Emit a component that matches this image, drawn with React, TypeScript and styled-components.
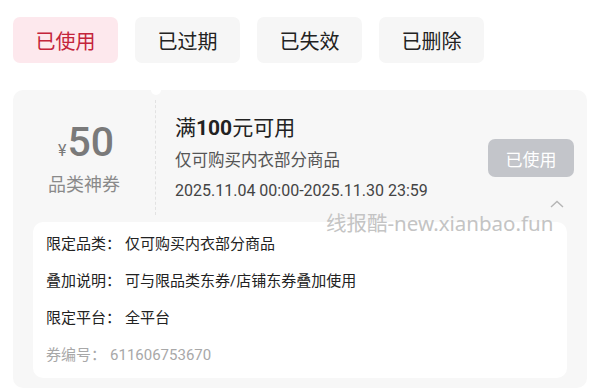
import styled, { createGlobalStyle } from "styled-components"

const GlobalStyle = createGlobalStyle`
  body {
    margin: 0;
    background: #ffffff;
    font-family: Roboto, "Noto Sans CJK SC", sans-serif;
    overflow: hidden;
  }
`

const TABS = ["已使用", "已过期", "已失效", "已删除"]

const DETAILS = [
  { label: "限定品类：", value: "仅可购买内衣部分商品" },
  { label: "叠加说明：", value: "可与限品类东券/店铺东券叠加使用" },
  { label: "限定平台：", value: "全平台" },
  { label: "券编号：", value: "611606753670", muted: true }
]

export default function App() {
  return (
    <>
      <GlobalStyle />
      <Page>
        <TabRow>
          {TABS.map((t, i) => (
            <Tab key={t} $active={i === 0}>
              {t}
            </Tab>
          ))}
        </TabRow>
        <Card>
          <Notch />
          <TopRow>
            <Amount>
              <Price>
                <Yen>¥</Yen>
                <Num>50</Num>
              </Price>
              <Kind>品类神券</Kind>
            </Amount>
            <Divider />
            <Info>
              <Title>
                满<b>100</b>元可用
              </Title>
              <Sub>仅可购买内衣部分商品</Sub>
              <DateText>2025.11.04 00:00-2025.11.30 23:59</DateText>
            </Info>
            <Side>
              <UsedButton>已使用</UsedButton>
              <Chevron viewBox="0 0 14 8" width="14" height="8">
                <path d="M1 7 L7 1.5 L13 7" fill="none" stroke="#b5b5b5" strokeWidth="1.4" />
              </Chevron>
            </Side>
          </TopRow>
          <Watermark>线报酷-new.xianbao.fun</Watermark>
          <DetailPanel>
            {DETAILS.map((d) => (
              <DetailRow key={d.label} $muted={d.muted}>
                <DetailLabel>{d.label}</DetailLabel>
                {d.value}
              </DetailRow>
            ))}
          </DetailPanel>
        </Card>
      </Page>
    </>
  )
}

const Page = styled.div`
  padding: 17px 13px 0;
`

const TabRow = styled.div`
  display: flex;
  gap: 17px;
`

const Tab = styled.div<{ $active?: boolean }>`
  width: 105px;
  height: 46px;
  border-radius: 7px;
  display: flex;
  align-items: center;
  justify-content: center;
  font-size: 20px;
  background: ${(p) => (p.$active ? "#fde8ed" : "#f6f6f6")};
  color: ${(p) => (p.$active ? "#c4243b" : "#222222")};
`

const Card = styled.div`
  position: relative;
  margin-top: 27px;
  width: 574px;
  background: #f7f7f7;
  border-radius: 10px;
  padding-bottom: 10px;
`

const Notch = styled.div`
  position: absolute;
  top: -5px;
  left: 138px;
  width: 10px;
  height: 10px;
  border-radius: 50%;
  background: #ffffff;
`

const TopRow = styled.div`
  display: flex;
  height: 125px;
`

const Amount = styled.div`
  width: 142px;
  display: flex;
  flex-direction: column;
  align-items: center;
  padding-top: 30px;
  box-sizing: border-box;
`

const Price = styled.div`
  display: flex;
  align-items: baseline;
  color: #7a7a7a;
  margin-left: 4px;
`

const Yen = styled.span`
  font-size: 16px;
  margin-right: 1px;
`

const Num = styled.span`
  font-size: 41px;
  font-weight: 500;
  line-height: 44px;
`

const Kind = styled.div`
  margin-top: 6px;
  font-size: 18px;
  color: #8a8a8a;
`

const Divider = styled.div`
  margin-top: 10px;
  border-left: 1.5px dashed #e2e2e2;
  height: 115px;
`

const Info = styled.div`
  flex: 1;
  padding: 24px 0 0 19px;
`

const Title = styled.div`
  font-size: 21px;
  line-height: 28px;
  color: #222222;
  margin-bottom: 4px;
  b {
    font-weight: 700;
  }
`

const Sub = styled.div`
  font-size: 16.5px;
  line-height: 30px;
  color: #555555;
`

const DateText = styled.div`
  font-size: 16px;
  line-height: 30px;
  color: #444444;
`

const Side = styled.div`
  display: flex;
  flex-direction: column;
  align-items: flex-end;
  padding: 49px 13px 0 0;
`

const UsedButton = styled.div`
  width: 86px;
  height: 38px;
  border-radius: 7px;
  background: #c3c5ca;
  color: #ffffff;
  font-size: 17px;
  display: flex;
  align-items: center;
  justify-content: center;
`

const Chevron = styled.svg`
  margin: 23px 10px 0 0;
`

const Watermark = styled.div`
  position: absolute;
  left: 313px;
  top: 119px;
  font-family: "Noto Sans", "Noto Sans CJK SC", sans-serif;
  font-size: 20.5px;
  line-height: 28px;
  color: #c4c4c4;
  z-index: 1;
  pointer-events: none;
`

const DetailPanel = styled.div`
  margin: 7px 20px 0;
  background: #ffffff;
  border-radius: 10px;
  padding: 4px 13px;
`

const DetailRow = styled.div<{ $muted?: boolean }>`
  font-size: 15px;
  line-height: 37px;
  color: ${(p) => (p.$muted ? "#a8a8a8" : "#222222")};
`

const DetailLabel = styled.span`
  margin-right: 4px;
`
